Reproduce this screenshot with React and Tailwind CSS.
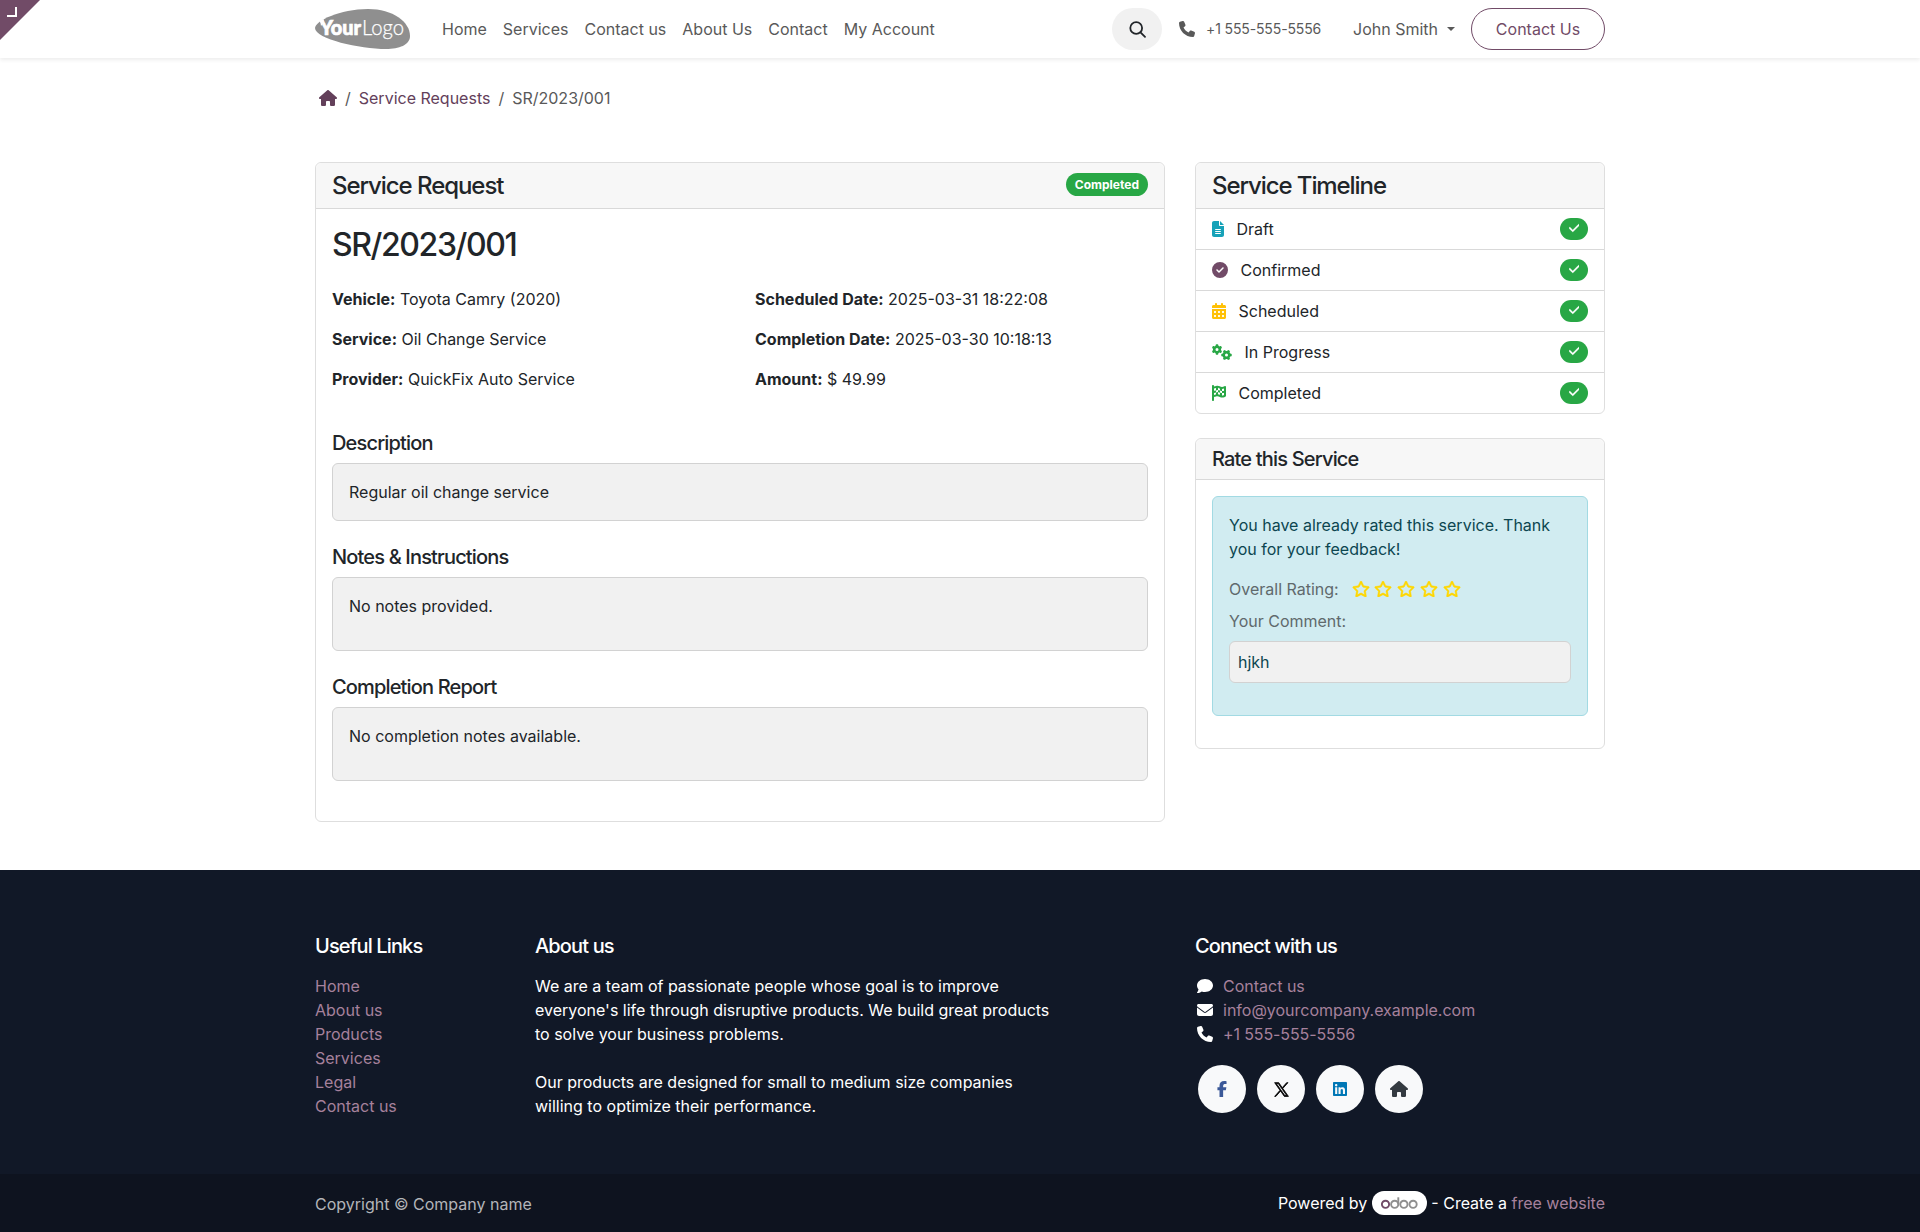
import React from "react";
import {
  FaPhone, FaHouse, FaFileLines, FaCircleCheck, FaCalendarDays, FaGears,
  FaFlagCheckered, FaCheck, FaRegStar, FaComment, FaEnvelope, FaFacebookF, FaLinkedin,
} from "react-icons/fa6";

function Logo() {
  return (
    <svg width="95" height="40" viewBox="0 0 95 40" className="block shrink-0">
      <path d="M0 19C0 12 25 0 53 0C78 0 95 13 95 27C95 36 84 40 71 40C45 40 0 30 0 19Z" fill="#8f8f8f" />
      <path d="M4 10.5L6 12L9 10L8.5 13L10.5 15L7.5 15L6 17L5.5 14Z" fill="#fff" />
      <text x="5" y="25.5" fontFamily="Lato, sans-serif" fontWeight="900" fontSize="20.5" fill="#fff" stroke="#fff" strokeWidth="0.7" textLength="41" lengthAdjust="spacingAndGlyphs">Your</text>
      <text x="47" y="25.5" fontFamily="Lato, sans-serif" fontWeight="300" fontSize="22" fill="#fff" stroke="#fff" strokeWidth="0.25" textLength="42" lengthAdjust="spacingAndGlyphs">Logo</text>
    </svg>
  );
}

function Header() {
  const links = ["Home", "Services", "Contact us", "About Us", "Contact", "My Account"];
  return (
    <header className="h-[58px] bg-white shadow-[0_2px_4px_rgba(0,0,0,0.075)]">
      <div className="mx-auto flex h-full w-[1290px] items-center text-[#595959]">
        <Logo />
        <nav className="ml-6 flex">
          {links.map((l) => <a key={l} className="px-2">{l}</a>)}
        </nav>
        <div className="ml-auto flex items-center">
          <button className="flex h-[42px] w-[50px] items-center justify-center rounded-full bg-[#f1f1f1] text-[#212529]">
            <svg width="17" height="17" viewBox="0 0 17 17" fill="none" stroke="currentColor" strokeWidth="1.8" strokeLinecap="round">
              <circle cx="7.2" cy="7" r="5.9" />
              <path d="M11.5 11.3 L16 15.8" />
            </svg>
          </button>
          <FaPhone className="ml-[17px] h-4 w-4" />
          <span className="ml-[11px] w-[115px] text-sm tracking-[-0.009em] whitespace-nowrap">+1 555-555-5556</span>
          <span className="ml-8">John Smith</span>
          <span className="ml-[9px] border-x-4 border-t-4 border-x-transparent border-t-[#595959]" />
          <button className="ml-4 h-[42px] w-[134px] rounded-full border border-[#714b67] text-[#714b67]">Contact Us</button>
        </div>
      </div>
    </header>
  );
}

const heading = "font-medium text-[#212529]";

function Field({ label, value }) {
  return <p className="mb-4"><strong className="font-bold">{label}:</strong> {value}</p>;
}

function NoteBox({ title, text, tall }) {
  return (
    <section className="mb-6">
      <h5 className="mb-2 text-xl leading-6 font-medium tracking-[-0.042em]">{title}</h5>
      <div className={"rounded-md border border-[#d2d2d2] bg-[#f1f1f1] p-4 " + (tall ? "pb-8" : "")}>{text}</div>
    </section>
  );
}

function RequestCard() {
  return (
    <div className="w-[850px] rounded-md border border-[#dedede] bg-white">
      <div className="flex justify-between rounded-t-md border-b border-[#d9d9d9] bg-[#f7f7f7] px-4 pt-[9px] pb-[7px]">
        <h4 className={"text-2xl leading-[28.8px] tracking-[-0.044em] " + heading}>Service Request</h4>
        <span className="mt-px h-[23px] rounded-full bg-[#28a745] px-[9px] text-xs leading-[23px] font-bold text-white">Completed</span>
      </div>
      <div className="px-4 pt-[17px] pb-4">
        <h2 className={"mb-[23px] text-[32px] leading-[38.4px] tracking-[-0.044em] " + heading}>SR/2023/001</h2>
        <div className="mb-6 grid grid-cols-2 gap-x-[30px]">
          <div>
            <Field label="Vehicle" value="Toyota Camry (2020)" />
            <Field label="Service" value="Oil Change Service" />
            <Field label="Provider" value="QuickFix Auto Service" />
          </div>
          <div>
            <Field label="Scheduled Date" value="2025-03-31 18:22:08" />
            <Field label="Completion Date" value="2025-03-30 10:18:13" />
            <Field label="Amount" value="$ 49.99" />
          </div>
        </div>
        <NoteBox title="Description" text="Regular oil change service" />
        <NoteBox title="Notes & Instructions" text="No notes provided." tall />
        <NoteBox title="Completion Report" text="No completion notes available." tall />
      </div>
    </div>
  );
}

function TimelineCard() {
  const steps = [
    [<FaFileLines className="h-4 w-3 text-[#17a2b8]" />, "Draft"],
    [<FaCircleCheck className="h-4 w-4 text-[#714b67]" />, "Confirmed"],
    [<FaCalendarDays className="h-4 w-3.5 text-[#ffc107]" />, "Scheduled"],
    [<FaGears className="h-4 w-5 text-[#28a745]" />, "In Progress"],
    [<FaFlagCheckered className="h-4 w-3.5 text-[#28a745]" />, "Completed"],
  ];
  return (
    <div className="rounded-md border border-[#dedede] bg-white">
      <div className="rounded-t-md bg-[#f7f7f7] px-4 pt-[9px] pb-[7px]">
        <h4 className={"text-2xl leading-[28.8px] tracking-[-0.045em] " + heading}>Service Timeline</h4>
      </div>
      <ul>
        {steps.map(([icon, label]) => (
          <li key={label} className="flex h-[41px] items-center border-t border-[#d9d9d9] px-4">
            {icon}
            <span className="ml-[12.5px]">{label}</span>
            <span className="ml-auto flex h-[22px] w-7 items-center justify-center rounded-full bg-[#28a745] text-white">
              <FaCheck className="mb-0.5 h-3 w-[10.5px]" stroke="#fff" strokeWidth="14" />
            </span>
          </li>
        ))}
      </ul>
    </div>
  );
}

function RateCard() {
  return (
    <div className="mt-6 rounded-md border border-[#dedede] bg-white">
      <div className="rounded-t-md border-b border-[#d9d9d9] bg-[#f7f7f7] px-4 py-2">
        <h5 className={"text-xl leading-6 tracking-[-0.041em] " + heading}>Rate this Service</h5>
      </div>
      <div className="p-4 pb-8">
        <div className="h-[220px] rounded-md border border-[#a2dae3] bg-[#d1ecf1] p-4 text-[#0c4650]">
          <p className="mb-4">You have already rated this service. Thank you for your feedback!</p>
          <div className="mb-2 flex items-center">
            <span className="text-[#60696c]">Overall Rating:</span>
            <span className="ml-[13px] flex gap-[4.8px] text-[#ffd700]">
              {[0, 1, 2, 3, 4].map((i) => <FaRegStar key={i} className="h-4 w-[18px]" strokeWidth="16" stroke="#ffd700" />)}
            </span>
          </div>
          <p className="mb-2 text-[#60696c]">Your Comment:</p>
          <div className="rounded-md border border-[#d2d2d2] bg-[#f1f1f1] p-2">hjkh</div>
        </div>
      </div>
    </div>
  );
}

function XLogo() {
  return (
    <svg width="15" height="15" viewBox="0 0 24 24" fill="#000">
      <path d="M14.1 10.3 22.3 1h-2l-7.1 8.1L7.6 1H1l8.6 12.3L1 23h2l7.5-8.6 6 8.6h6.6zm-2.7 3-.9-1.2L3.7 2.4h3l5.6 7.9.8 1.2 7.2 10.2h-3z" stroke="#000" strokeWidth="1.3" />
    </svg>
  );
}

function Social({ children }) {
  return <a className="flex size-12 items-center justify-center rounded-full bg-[#f8f9fa]">{children}</a>;
}

function Footer() {
  const h = "mb-4 text-xl leading-6 font-medium tracking-[-0.043em]";
  const links = ["Home", "About us", "Products", "Services", "Legal", "Contact us"];
  const contacts = [
    [<FaComment className="size-4" />, <a className="text-[#a6819c]">Contact us</a>],
    [<FaEnvelope className="size-4" />, <a className="text-[#a6819c]">info@yourcompany.example.com</a>],
    [<FaPhone className="size-4" />, <a className="tracking-[-0.007em] text-[#a6819c]">+1 555-555-5556</a>],
  ];
  return (
    <footer className="bg-[#111827] text-white">
      <div className="mx-auto flex h-[304px] w-[1290px] pt-16">
        <div className="w-[220px]">
          <h5 className={h}>Useful Links</h5>
          <ul className="text-[#a6819c]">{links.map((l) => <li key={l}>{l}</li>)}</ul>
        </div>
        <div className="w-[520px]">
          <h5 className={h}>About us</h5>
          <p className="mb-6">We are a team of passionate people whose goal is to improve everyone's life through disruptive products. We build great products to solve your business problems.</p>
          <p>Our products are designed for small to medium size companies willing to optimize their performance.</p>
        </div>
        <div className="ml-auto w-[410px]">
          <h5 className={h}>Connect with us</h5>
          <ul>
            {contacts.map(([icon, link], i) => (
              <li key={i} className="flex items-center gap-[10px] pl-0.5">{icon}{link}</li>
            ))}
          </ul>
          <div className="mt-[19px] ml-[3px] flex gap-[11px]">
            <Social><FaFacebookF className="h-4 w-[10px] text-[#3b5998]" /></Social>
            <Social><XLogo /></Social>
            <Social><FaLinkedin className="h-4 w-[14px] text-[#0077b5]" /></Social>
            <Social><FaHouse className="h-4 w-[18px] text-[#343a40]" /></Social>
          </div>
        </div>
      </div>
      <div className="bg-[#0e131f]">
        <div className="mx-auto flex h-[58px] w-[1290px] items-center justify-between">
          <span className="pt-0.5 text-[#b3b5b9]">Copyright © Company name</span>
          <div className="flex items-center">
            Powered by
            <span className="mr-1 ml-[5px] flex h-6 w-[55px] items-center justify-center rounded-full bg-white">
              <svg width="37" height="12" viewBox="0 0 37 12" fill="none" stroke="#8f8f8f" strokeWidth="1.9">
                <circle cx="4.5" cy="7.3" r="3.6" stroke="#714b67" />
                <circle cx="13.7" cy="7.3" r="3.6" />
                <path d="M17.3 7.3V0.3" />
                <circle cx="22.9" cy="7.3" r="3.6" />
                <circle cx="32.1" cy="7.3" r="3.6" />
              </svg>
            </span>
            - Create a&nbsp;<a className="text-[#a6819c]">free website</a>
          </div>
        </div>
      </div>
    </footer>
  );
}

export default function App() {
  return (
    <div className="relative min-h-[1232px] bg-white font-['Inter',sans-serif] text-base text-[#212529]">
      <svg width="40" height="40" className="absolute top-0 left-0 z-10">
        <path d="M0 0H40L0 40Z" fill="#714b67" />
        <path d="M7 16H16V7" fill="none" stroke="#fff" strokeWidth="2" />
      </svg>
      <Header />
      <main className="mx-auto w-[1290px] pb-12">
        <div className="flex h-[104px] items-start pt-7 text-[#595959]">
          <FaHouse className="mt-1 ml-1 h-4 w-[18px] text-[#63405a]" />
          <span className="ml-2">/</span>
          <a className="ml-2 text-[#63405a]">Service Requests</a>
          <span className="mx-2">/</span>
          <span>SR/2023/001</span>
        </div>
        <div className="flex items-start gap-[30px]">
          <RequestCard />
          <div className="w-[410px]">
            <TimelineCard />
            <RateCard />
          </div>
        </div>
      </main>
      <Footer />
    </div>
  );
}
